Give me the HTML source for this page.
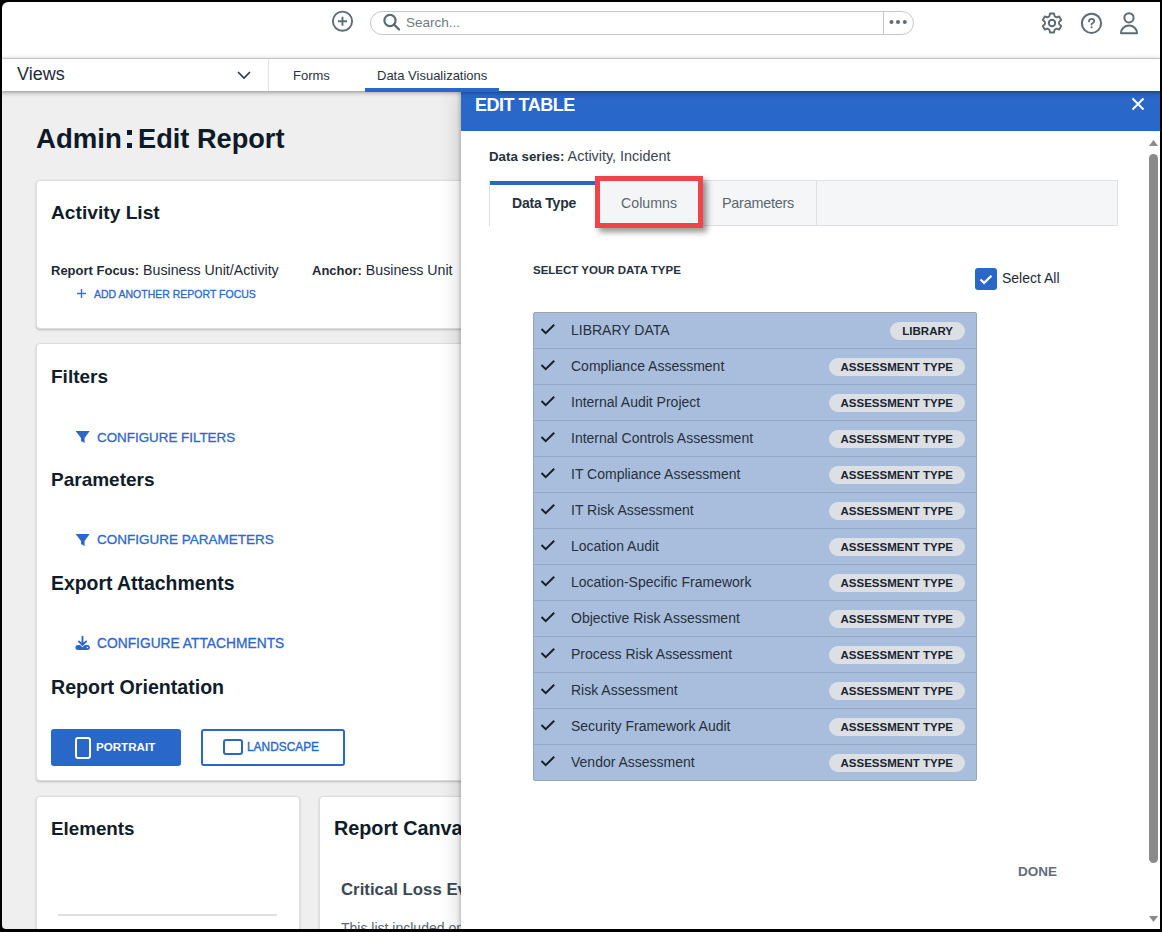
<!DOCTYPE html>
<html><head><meta charset="utf-8">
<style>
*{box-sizing:border-box;margin:0;padding:0}
html,body{width:1162px;height:932px;overflow:hidden;background:#efefef}
body{position:relative;font-family:"Liberation Sans",sans-serif;}
.t{position:absolute;line-height:1;white-space:nowrap}
#frame{position:absolute;left:2px;top:2px;width:1158px;height:927px;border-radius:6px 0 0 4px;box-shadow:0 0 0 12px #000;z-index:100}
#hdr{position:absolute;left:0;top:0;width:1162px;height:59px;background:#fff;border-bottom:1px solid #dde2e6}
#nav{position:absolute;left:0;top:59px;width:1162px;height:32px;background:#fff;box-shadow:0 1px 5px rgba(0,0,0,.45);z-index:6}
.card{position:absolute;background:#fff;border:1px solid #dcdfe2;border-radius:4px;box-shadow:0 1px 2px rgba(0,0,0,.22)}
.h{font-weight:700;color:#0f1c2a}
.lnk{color:#2f67c9;-webkit-text-stroke:0.3px #2f67c9}
#panel{position:absolute;left:461px;top:91px;width:699px;height:841px;background:#fff;z-index:5;box-shadow:-2px 0 3px rgba(0,0,0,.16),-5px 0 18px rgba(0,0,0,.12)}
#phdr{position:absolute;left:0;top:0;width:699px;height:40px;background:#2967c8}
#pin{position:absolute;left:0;top:1px;width:699px;height:840px}
.row{position:absolute;left:0;width:443px;height:36px;border-bottom:1px solid #91a8c8}
.row:last-child{border-bottom:none}
.row svg{position:absolute;left:6px;top:10px}
.row .tx{position:absolute;left:37px;top:10px;font-size:14px;line-height:1;white-space:nowrap;color:#27303b}
.badge{position:absolute;right:12px;top:9px;height:18px;border-radius:9px;background:#dcdfe3;font-weight:700;font-size:11.5px;color:#1a2430;line-height:18px;padding:0 12px;white-space:nowrap}
</style></head><body>
<div id="frame"></div>

<!-- top header -->
<div id="hdr">
  <svg style="position:absolute;left:331px;top:10px" width="23" height="23" viewBox="0 0 23 23">
    <circle cx="11.5" cy="11.2" r="9.6" fill="none" stroke="#5d6b76" stroke-width="1.9"/>
    <path d="M11.5 6.7v9M7 11.2h9" stroke="#5d6b76" stroke-width="1.9" fill="none"/>
  </svg>
  <div style="position:absolute;left:370px;top:11px;width:544px;height:24px;border:1px solid #c4c8cb;border-radius:12px;background:#fff"></div>
  <div style="position:absolute;left:883px;top:12px;width:1px;height:22px;background:#c4c8cb"></div>
  <svg style="position:absolute;left:382px;top:13px" width="20" height="19" viewBox="0 0 20 19">
    <circle cx="8" cy="7.5" r="5.6" fill="none" stroke="#5d6b76" stroke-width="2.2"/>
    <path d="M12 11.5l5 5" stroke="#5d6b76" stroke-width="2.4" stroke-linecap="round"/>
  </svg>
  <div class="t" style="left:406px;top:16px;font-size:13.5px;color:#6f7a83">Search...</div>
  <svg style="position:absolute;left:887px;top:18px" width="22" height="8" viewBox="0 0 22 8">
    <circle cx="4.5" cy="4" r="2" fill="#5d6b76"/><circle cx="11" cy="4" r="2" fill="#5d6b76"/><circle cx="17.8" cy="4" r="2" fill="#5d6b76"/>
  </svg>
  <!-- gear -->
  <svg style="position:absolute;left:1040px;top:11px" width="24" height="24" viewBox="0 0 24 24">
    <path fill="none" stroke="#5d6b76" stroke-width="1.85" stroke-linejoin="round" d="M10 2.5h4l.6 2.8 1.9 1.1 2.7-.9 2 3.5-2.1 1.9v2.2l2.1 1.9-2 3.5-2.7-.9-1.9 1.1-.6 2.8h-4l-.6-2.8-1.9-1.1-2.7.9-2-3.5 2.1-1.9v-2.2L2.8 9l2-3.5 2.7.9 1.9-1.1z"/>
    <circle cx="12" cy="12" r="3.2" fill="none" stroke="#5d6b76" stroke-width="2"/>
  </svg>
  <!-- help -->
  <svg style="position:absolute;left:1080px;top:12px" width="23" height="23" viewBox="0 0 23 23">
    <circle cx="11.5" cy="11.3" r="9.6" fill="none" stroke="#5d6b76" stroke-width="2"/>
    <path d="M9 9.4c0-1.6 1.1-2.6 2.6-2.6s2.6 1 2.6 2.3c0 1.4-1.1 1.8-1.9 2.2-.6.3-.7.7-.7 1.3" fill="none" stroke="#5d6b76" stroke-width="1.8" stroke-linecap="round"/>
    <circle cx="11.6" cy="15.3" r="1.05" fill="#5d6b76"/>
  </svg>
  <!-- user -->
  <svg style="position:absolute;left:1118px;top:11px" width="22" height="24" viewBox="0 0 22 24">
    <circle cx="11" cy="6.8" r="4.6" fill="none" stroke="#5d6b76" stroke-width="2"/>
    <path d="M3 22.2c0-4.6 3.6-7.6 8-7.6s8 3 8 7.6z" fill="none" stroke="#5d6b76" stroke-width="2" stroke-linejoin="round"/>
  </svg>
</div>

<!-- nav -->
<div id="nav">
  <div class="t" style="left:17px;top:6px;font-size:18px;color:#1b2b3b">Views</div>
  <svg style="position:absolute;left:236px;top:11px" width="16" height="10" viewBox="0 0 16 10">
    <path d="M2 2l6 6 6-6" fill="none" stroke="#2a3845" stroke-width="1.6"/>
  </svg>
  <div style="position:absolute;left:268px;top:0;width:1px;height:32px;background:#e1e4e7"></div>
  <div class="t" style="left:293px;top:10px;font-size:13px;color:#27343f">Forms</div>
  <div class="t" style="left:377px;top:10px;font-size:13px;color:#27343f">Data Visualizations</div>
  <div style="position:absolute;left:365px;top:29px;width:134px;height:4px;background:#2967c8"></div>
</div>

<!-- page content -->
<div class="t h" style="left:36px;top:125.4px;font-size:27.6px;color:#0d1a28">Admin</div>
<div style="position:absolute;left:127px;top:130px;width:5px;height:5px;background:#0d1a28"></div>
<div style="position:absolute;left:127px;top:143px;width:5px;height:5px;background:#0d1a28"></div>
<div class="t h" style="left:138px;top:125px;font-size:27.2px;color:#0d1a28">Edit Report</div>

<div class="card" style="left:36px;top:180px;width:1090px;height:149px"></div>
<div class="t h" style="left:51px;top:203px;font-size:19.2px">Activity List</div>
<div class="t" style="left:51px;top:263px;font-size:14.2px;color:#1f2a36"><b style="font-size:13px">Report Focus:</b> Business Unit/Activity</div>
<div class="t" style="left:312px;top:263px;font-size:14.2px;color:#1f2a36"><b style="font-size:13px">Anchor:</b> Business Unit</div>
<svg style="position:absolute;left:77px;top:289px" width="9" height="9" viewBox="0 0 9 9"><path d="M4.5 0v9M0 4.5h9" stroke="#3a6fcf" stroke-width="1.4"/></svg>
<div class="t lnk" style="left:94px;top:289px;font-size:10.5px">ADD ANOTHER REPORT FOCUS</div>

<div class="card" style="left:36px;top:343px;width:1090px;height:438px"></div>
<div class="t h" style="left:51px;top:367px;font-size:19px">Filters</div>
<svg style="position:absolute;left:75px;top:430px" width="16" height="14" viewBox="0 0 16 14"><path d="M.6 .9H14.7L9.6 8.1V13L6 11.1V8.1z" fill="#2f67c9"/></svg>
<div class="t lnk" style="left:97px;top:431px;font-size:13.4px">CONFIGURE FILTERS</div>
<div class="t h" style="left:51px;top:470px;font-size:19px">Parameters</div>
<svg style="position:absolute;left:75px;top:533px" width="16" height="14" viewBox="0 0 16 14"><path d="M.6 .9H14.7L9.6 8.1V13L6 11.1V8.1z" fill="#2f67c9"/></svg>
<div class="t lnk" style="left:97px;top:533px;font-size:13.5px">CONFIGURE PARAMETERS</div>
<div class="t h" style="left:51px;top:574px;font-size:19.4px">Export Attachments</div>
<svg style="position:absolute;left:75px;top:635px" width="16" height="16" viewBox="0 0 16 16"><path d="M7.5 1.8v7.8M3.9 6.4l3.6 3.6 3.6-3.6" fill="none" stroke="#2f67c9" stroke-width="1.9" stroke-linecap="round" stroke-linejoin="round"/><path d="M2.9 10h2.2l2.4 2.3 2.4-2.3h2.5a2.5 2.5 0 0 1 0 5H2.9a2.5 2.5 0 0 1 0-5z" fill="#2f67c9"/><circle cx="12.4" cy="12.5" r=".8" fill="#fff"/></svg>
<div class="t lnk" style="left:97px;top:637px;font-size:13.8px">CONFIGURE ATTACHMENTS</div>
<div class="t h" style="left:51px;top:678px;font-size:19.6px">Report Orientation</div>
<div style="position:absolute;left:51px;top:729px;width:130px;height:37px;background:#2967c8;border-radius:3px"></div>
<div style="position:absolute;left:75px;top:737px;width:16px;height:22px;border:2px solid #fff;border-radius:3px"></div>
<div class="t" style="left:96px;top:741px;font-size:11.6px;font-weight:700;color:#fff">PORTRAIT</div>
<div style="position:absolute;left:201px;top:729px;width:144px;height:37px;border:2px solid #2967c8;border-radius:3px;background:#fff"></div>
<div style="position:absolute;left:223px;top:739px;width:20px;height:16px;border:2px solid #2967c8;border-radius:3px"></div>
<div class="t" style="left:247px;top:742px;font-size:11.9px;color:#2967c8;-webkit-text-stroke:0.35px #2967c8">LANDSCAPE</div>

<div class="card" style="left:36px;top:796px;width:264px;height:200px"></div>
<div class="t h" style="left:51px;top:820px;font-size:18.8px">Elements</div>
<div style="position:absolute;left:58px;top:914px;width:219px;height:2px;background:#dfdfdf"></div>
<div class="card" style="left:319px;top:796px;width:800px;height:200px"></div>
<div class="t h" style="left:334px;top:819px;font-size:19.8px">Report Canvas</div>
<div class="t" style="left:341px;top:882px;font-size:16.8px;font-weight:700;color:#3b4753">Critical Loss Events</div>
<div class="t" style="left:341px;top:921px;font-size:14px;color:#5a6670">This list included only</div>

<!-- right panel -->
<div id="panel">
  <div id="phdr">
    <div class="t" style="left:14px;top:4.5px;font-size:18px;letter-spacing:-0.5px;font-weight:700;color:#fff">EDIT TABLE</div>
    <svg style="position:absolute;left:670px;top:6px" width="14" height="14" viewBox="0 0 14 14"><path d="M1.5 1.5l11 11M12.5 1.5l-11 11" stroke="#fff" stroke-width="2"/></svg>
  </div>
  <div id="pin">
  <div class="t" style="left:28px;top:57px;font-size:14.4px;color:#3a4550"><b style="color:#25313c;font-size:13.3px">Data series:</b> Activity, Incident</div>
  <!-- tabs -->
  <div style="position:absolute;left:28px;top:88px;width:629px;height:46px;background:#f5f6f8;border:1px solid #dde1e5"></div>
  <div style="position:absolute;left:28px;top:88px;width:107px;height:46px;background:#fff;border-left:1px solid #dde1e5"></div>
  <div style="position:absolute;left:29px;top:89px;width:106px;height:4px;background:#2967c8"></div>
  <div style="position:absolute;left:355px;top:88px;width:1px;height:46px;background:#dde1e5"></div>
  <div class="t" style="left:51px;top:104px;font-size:14px;letter-spacing:-0.2px;font-weight:700;color:#25313c">Data Type</div>
  <div style="position:absolute;left:134px;top:84px;width:108px;height:52px;border:5px solid #f3434a;box-shadow:4px 4px 6px rgba(0,0,0,.42);background:#f4f5f7"></div>
  <div class="t" style="left:160px;top:104px;font-size:14.2px;color:#5b6670">Columns</div>
  <div class="t" style="left:261px;top:104px;font-size:14.4px;letter-spacing:-0.25px;color:#5b6670">Parameters</div>

  <div class="t" style="left:72px;top:173px;font-size:11.5px;font-weight:700;color:#25313c">SELECT YOUR DATA TYPE</div>
  <div style="position:absolute;left:514px;top:176px;width:22px;height:22px;background:#2967c8;border-radius:3px"></div>
  <svg style="position:absolute;left:514px;top:176px" width="22" height="22" viewBox="0 0 22 22"><path d="M5.5 11.5l3.6 3.4 7.4-7.2" fill="none" stroke="#fff" stroke-width="2.2"/></svg>
  <div class="t" style="left:541px;top:179px;font-size:14px;color:#1f2a36">Select All</div>

  <div style="position:absolute;left:72px;top:220px;width:444px;height:469px;background:#a9bedd;border:1px solid #98a4b0;border-radius:2px;overflow:hidden">
    <div class="row" style="top:0"><svg width="16" height="12" viewBox="0 0 16 12"><path d="M1.5 6l4.2 4.2 8.5-8.5" fill="none" stroke="#16202b" stroke-width="2"/></svg><div class="tx">LIBRARY DATA</div><div class="badge">LIBRARY</div></div>
    <div class="row" style="top:36px"><svg width="16" height="12" viewBox="0 0 16 12"><path d="M1.5 6l4.2 4.2 8.5-8.5" fill="none" stroke="#16202b" stroke-width="2"/></svg><div class="tx">Compliance Assessment</div><div class="badge">ASSESSMENT TYPE</div></div>
    <div class="row" style="top:72px"><svg width="16" height="12" viewBox="0 0 16 12"><path d="M1.5 6l4.2 4.2 8.5-8.5" fill="none" stroke="#16202b" stroke-width="2"/></svg><div class="tx">Internal Audit Project</div><div class="badge">ASSESSMENT TYPE</div></div>
    <div class="row" style="top:108px"><svg width="16" height="12" viewBox="0 0 16 12"><path d="M1.5 6l4.2 4.2 8.5-8.5" fill="none" stroke="#16202b" stroke-width="2"/></svg><div class="tx">Internal Controls Assessment</div><div class="badge">ASSESSMENT TYPE</div></div>
    <div class="row" style="top:144px"><svg width="16" height="12" viewBox="0 0 16 12"><path d="M1.5 6l4.2 4.2 8.5-8.5" fill="none" stroke="#16202b" stroke-width="2"/></svg><div class="tx">IT Compliance Assessment</div><div class="badge">ASSESSMENT TYPE</div></div>
    <div class="row" style="top:180px"><svg width="16" height="12" viewBox="0 0 16 12"><path d="M1.5 6l4.2 4.2 8.5-8.5" fill="none" stroke="#16202b" stroke-width="2"/></svg><div class="tx">IT Risk Assessment</div><div class="badge">ASSESSMENT TYPE</div></div>
    <div class="row" style="top:216px"><svg width="16" height="12" viewBox="0 0 16 12"><path d="M1.5 6l4.2 4.2 8.5-8.5" fill="none" stroke="#16202b" stroke-width="2"/></svg><div class="tx">Location Audit</div><div class="badge">ASSESSMENT TYPE</div></div>
    <div class="row" style="top:252px"><svg width="16" height="12" viewBox="0 0 16 12"><path d="M1.5 6l4.2 4.2 8.5-8.5" fill="none" stroke="#16202b" stroke-width="2"/></svg><div class="tx">Location-Specific Framework</div><div class="badge">ASSESSMENT TYPE</div></div>
    <div class="row" style="top:288px"><svg width="16" height="12" viewBox="0 0 16 12"><path d="M1.5 6l4.2 4.2 8.5-8.5" fill="none" stroke="#16202b" stroke-width="2"/></svg><div class="tx">Objective Risk Assessment</div><div class="badge">ASSESSMENT TYPE</div></div>
    <div class="row" style="top:324px"><svg width="16" height="12" viewBox="0 0 16 12"><path d="M1.5 6l4.2 4.2 8.5-8.5" fill="none" stroke="#16202b" stroke-width="2"/></svg><div class="tx">Process Risk Assessment</div><div class="badge">ASSESSMENT TYPE</div></div>
    <div class="row" style="top:360px"><svg width="16" height="12" viewBox="0 0 16 12"><path d="M1.5 6l4.2 4.2 8.5-8.5" fill="none" stroke="#16202b" stroke-width="2"/></svg><div class="tx">Risk Assessment</div><div class="badge">ASSESSMENT TYPE</div></div>
    <div class="row" style="top:396px"><svg width="16" height="12" viewBox="0 0 16 12"><path d="M1.5 6l4.2 4.2 8.5-8.5" fill="none" stroke="#16202b" stroke-width="2"/></svg><div class="tx">Security Framework Audit</div><div class="badge">ASSESSMENT TYPE</div></div>
    <div class="row" style="top:432px"><svg width="16" height="12" viewBox="0 0 16 12"><path d="M1.5 6l4.2 4.2 8.5-8.5" fill="none" stroke="#16202b" stroke-width="2"/></svg><div class="tx">Vendor Assessment</div><div class="badge">ASSESSMENT TYPE</div></div>
  </div>
  <div class="t" style="left:557px;top:773px;font-size:13.5px;font-weight:700;color:#5f6e7a">DONE</div>
  <!-- scrollbar -->
  <svg style="position:absolute;left:688px;top:48px" width="9" height="6" viewBox="0 0 9 6"><path d="M4.5 0L9 6H0z" fill="#8a8a8a"/></svg>
  <div style="position:absolute;left:688px;top:62px;width:9px;height:709px;background:#8a8a8a;border-radius:4.5px"></div>
  <svg style="position:absolute;left:688px;top:824px" width="9" height="6" viewBox="0 0 9 6"><path d="M0 0H9L4.5 6z" fill="#8a8a8a"/></svg>
  </div>
</div>
</body></html>
